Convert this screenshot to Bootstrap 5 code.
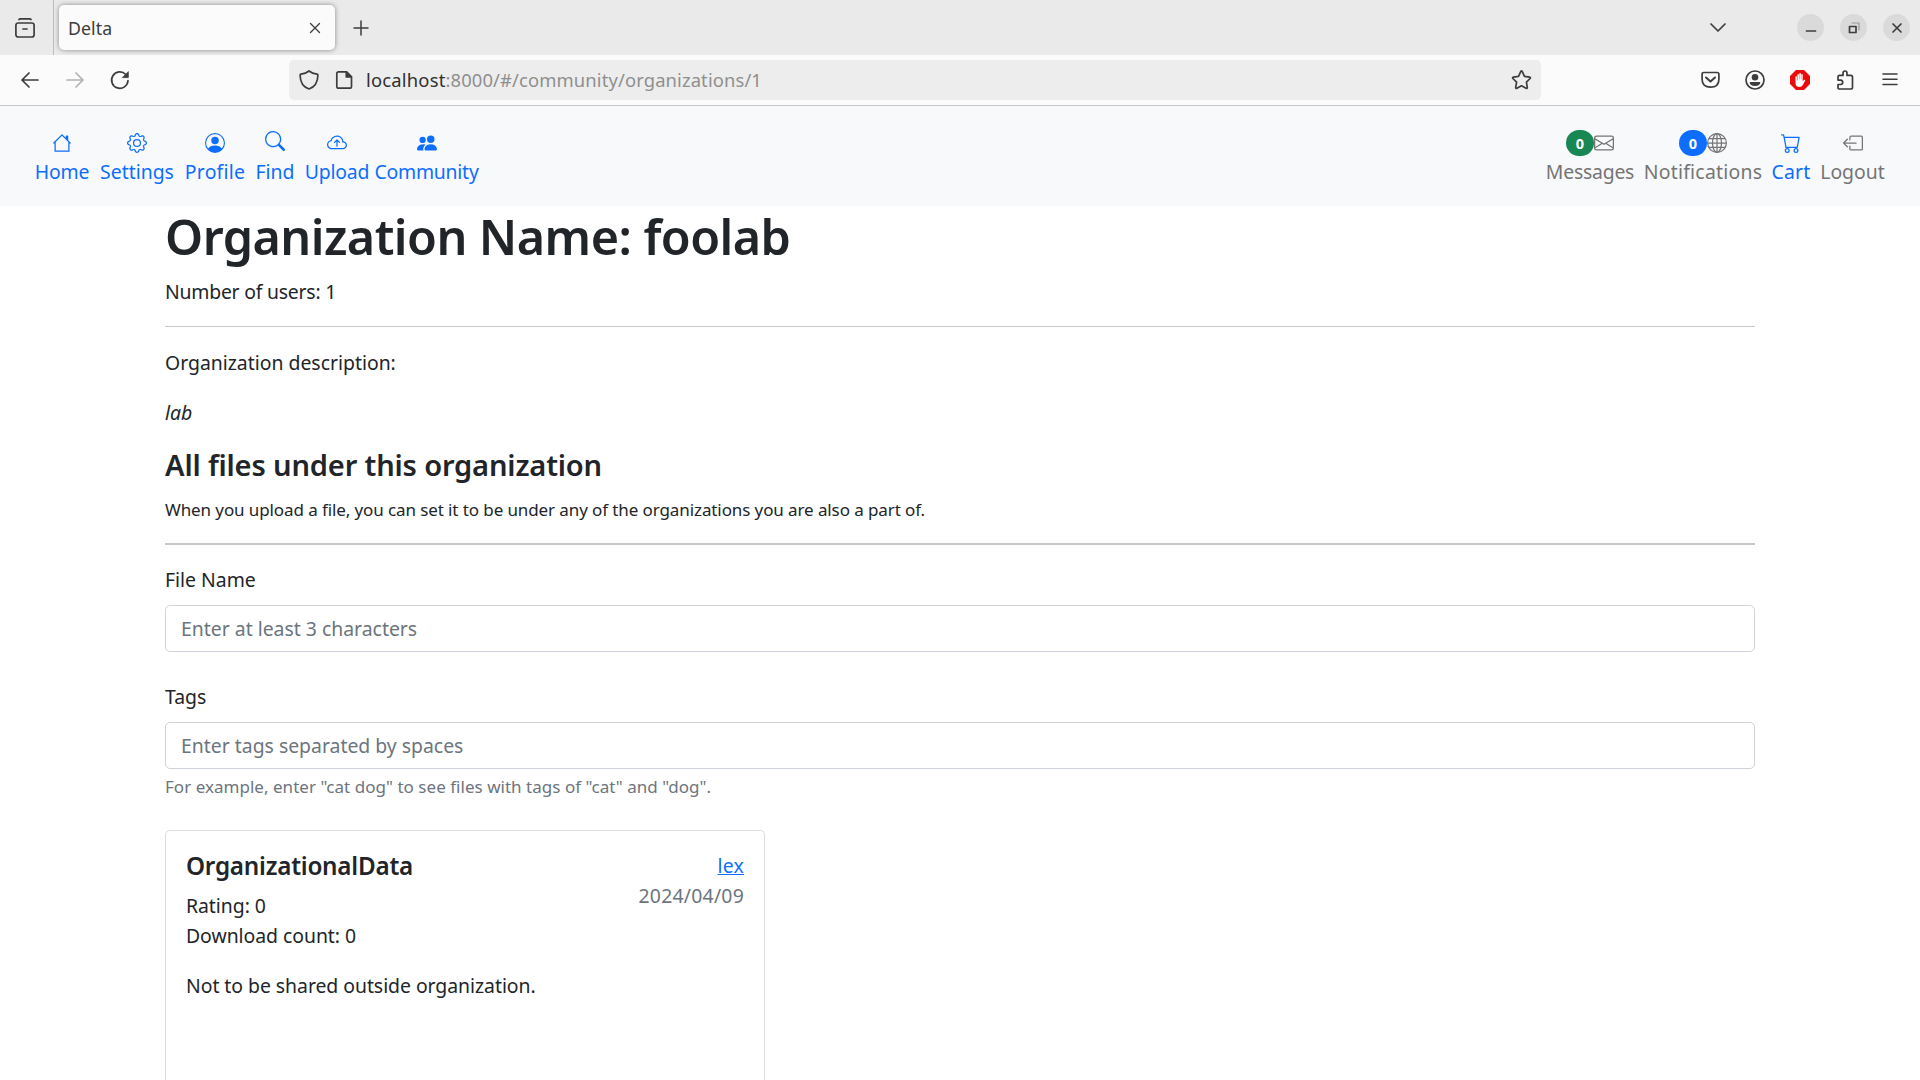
<!DOCTYPE html>
<html lang="en">
<head>
<meta charset="utf-8">
<meta name="viewport" content="width=device-width, initial-scale=1">
<title>Delta</title>
<link rel="stylesheet" href="https://cdn.jsdelivr.net/npm/bootstrap@5.3.0/dist/css/bootstrap.min.css">
<style>
html { font-size: 20px; }
body { font-family: "Noto Sans", "Open Sans", sans-serif; font-size: 19.4px; line-height: 30px; color: #212529; height: 1080px; overflow: hidden; }
svg { display: block; flex: none; overflow: visible; }
.line-icon { fill: none; stroke: #3d3d3d; stroke-width: 1.7; stroke-linecap: round; stroke-linejoin: round; }
/* Browser window */
.tab-strip { height: 55px; background: #eaeaea; padding-right: 10px; }
.strip-start { width: 54px; border-right: 1px solid #bdbdbd; padding-left: 15px; }
.page-tab { width: 276px; height: 45px; margin-left: 5px; padding: 0 14px 0 9px; border-radius: 5px; background: #fbfbfb; box-shadow: 0 0 5px rgba(0,0,0,.42); font-size: 17.7px; letter-spacing: .1px; color: #3d3d3d; }
.new-tab { margin-left: 15px; }
.win-controls { gap: 16px; margin-left: 71px; }
.win-btn { width: 27px; height: 27px; border-radius: 50%; background: #dadada; }
.address-row { height: 51px; background: #fbfbfb; border-bottom: 1px solid #c6c6c6; padding-left: 20px; padding-right: 20px; }
.nav-tools { width: 269px; gap: 25px; }
.url-field { width: 1252px; height: 40px; border-radius: 5px; background: #ededed; padding: 0 9px 0 10px; font-size: 18.4px; letter-spacing: .12px; color: #8f8f8f; }
.url-host { color: #303030; letter-spacing: .2px; }
.page-icon { margin-left: 18px; }
.url-text { margin-left: 13px; }
.tool-icons { gap: 25px; }
/* Application bar */
.app-bar { height: 100px; background: #f8f9fb; padding: 24px 34px 0; }
.bar-item { color: #0d6efd; text-decoration: none; white-space: nowrap; text-align: center; }
.bar-item.muted { color: #757575; }
.icon-slot { height: 26px; margin-bottom: 1px; display: flex; align-items: center; justify-content: center; }
.count-pill { width: 28px; height: 26px; padding: 0; font-size: 14.5px; line-height: 27px; font-weight: 700; }
.w-home { width: 56px; }
.w-settings { width: 94px; }
.w-profile { width: 62px; }
.w-find { width: 58px; }
.w-upload { width: 66px; }
.w-community { width: 113px; }
.w-messages { width: 90px; }
.w-notifications { width: 136px; }
.w-cart { width: 40px; }
.w-logout { width: 75px; padding-left: 8px; }
/* Organization page */
.org-page { padding: 0 165px; }
h1, h3, h5 { font-weight: 600; }
h1 { font-size: 48.5px; line-height: 60px; letter-spacing: -.54px; margin-bottom: 11px; }
h3 { font-size: 29.1px; line-height: 36px; letter-spacing: -.176px; margin: -1px 0 14px; }
.fine { font-size: 17px; line-height: 26.25px; letter-spacing: -.1px; }
.hint { font-size: 17px; line-height: 26.25px; color: #6c757d; margin-top: 5px; letter-spacing: .028px; }
.form-control { font-size: 19.4px; line-height: 30px; height: 47px; border-radius: 5px; border-color: #ced4da; }
.form-control::placeholder { color: #6c757d; }
hr { height: 0; opacity: 1; }
.rule-thin { margin: 19px 0 21px; border-top: 1px solid #c8c9ca; }
.rule-thick { margin: 20px 0; border-top: 2px solid #c8c9ca; }
.file-card { width: 600px; height: 250px; margin-top: 29px; border-color: #dcdddd; border-radius: 5px; }
.file-card h5 { font-size: 24.25px; line-height: 30px; letter-spacing: -.231px; }
.file-card p, .file-card .rating { letter-spacing: -.035px; }
.track-1 { letter-spacing: -.22px; }
.track-2 { letter-spacing: .23px; }
</style>
</head>
<body>
<header>
  <div class="tab-strip d-flex align-items-center">
    <div class="strip-start h-100 d-flex align-items-center">
      <svg class="line-icon" width="20" height="20" viewBox="0 0 20 20"><path d="M4 1.5Q4.400 .9 5.300 .9H14.700Q15.600 .9 16 1.500"/><rect x=".9" y="5" width="18.200" height="14" rx="2.300"/><path d="M8 11h4"/></svg>
    </div>
    <div class="page-tab d-flex align-items-center justify-content-between">
      <span>Delta</span>
      <svg class="line-icon" width="12" height="12" viewBox="0 0 12 12"><path stroke-width="1.300" d="M1.500 1.500l9 9M10.500 1.500l-9 9"/></svg>
    </div>
    <svg class="line-icon new-tab" width="20" height="20" viewBox="0 0 20 20"><path d="M4 10H18M11 3V17" stroke-width="1.500"/></svg>
    <div class="ms-auto d-flex align-items-center">
      <svg class="line-icon" width="16" height="10" viewBox="0 0 16 10"><path d="M1 1l7 7 7-7"/></svg>
      <div class="win-controls d-flex">
        <span class="win-btn d-flex align-items-center justify-content-center"><svg class="line-icon" width="12" height="12" viewBox="0 0 12 12"><path d="M1.500 9h9"/></svg></span>
        <span class="win-btn d-flex align-items-center justify-content-center"><svg class="line-icon" width="12" height="12" viewBox="0 0 12 12"><path d="M4 1h7v7" stroke="#999" stroke-width="1.200"/><path d="M1.500 4.500h6.500v6h-6.500z"/></svg></span>
        <span class="win-btn d-flex align-items-center justify-content-center"><svg class="line-icon" width="12" height="12" viewBox="0 0 12 12"><path d="M2 2l8 8M10 2l-8 8"/></svg></span>
      </div>
    </div>
  </div>
  <div class="address-row d-flex align-items-center">
    <div class="nav-tools d-flex align-items-center">
      <svg class="line-icon" width="20" height="20" viewBox="0 0 20 20"><path d="M18 10H2M9 3L2 10l7 7"/></svg>
      <svg class="line-icon" width="20" height="20" viewBox="0 0 20 20"><path stroke="#b3b3b3" d="M2 10h16M11 3l7 7-7 7"/></svg>
      <svg class="line-icon" width="20" height="20" viewBox="0 0 20 20"><path d="M18 10.500a8.200 8.200 0 1 1-2.200-6l1 1"/><path d="M18.300 2v5.600h-5.600z" fill="#3d3d3d" stroke-width=".8"/></svg>
    </div>
    <div class="url-field d-flex align-items-center">
      <svg class="line-icon" width="20" height="20" viewBox="0 0 20 20"><path d="M10 1C7.500 3 4.500 3.900 2 4.200C1.400 4.300 1.100 4.700 1.100 5.300C1.200 11.500 4 17 10 19C16 17 18.800 11.500 18.900 5.300C18.900 4.700 18.600 4.300 18 4.200C15.500 3.900 12.500 3 10 1Z"/></svg>
      <svg class="line-icon page-icon" width="16" height="20" viewBox="2 0 16 20"><path d="M3.500 1.900h8l5 5v9.600q0 1.700-1.700 1.700H3.500q-1.700 0-1.700-1.700V3.600q0-1.700 1.700-1.700z"/><path d="M11.300 1.900v5h5z" fill="#3d3d3d"/></svg>
      <div class="url-text"><span class="url-host">localhost</span>:8000/#/community/organizations/1</div>
      <svg class="line-icon ms-auto" width="21" height="20" viewBox="0 0 20 20"><path d="M9.200 1.600q.8-1.300 1.600 0l2.200 4.800 5.100.7q1.400.3.500 1.400l-3.700 3.700.9 5.200q.1 1.500-1.200.9L10 15.800l-4.600 2.500q-1.300.6-1.200-.9l.9-5.200-3.700-3.700q-.9-1.100.5-1.400l5.100-.7z"/></svg>
    </div>
    <div class="tool-icons ms-auto d-flex align-items-center">
      <svg class="line-icon" width="19" height="20" viewBox="0 0 19 20"><path d="M2.800 2.500h13.400q1.700 0 1.700 1.700v5q0 8-8.400 8t-8.400-8v-5q0-1.700 1.700-1.700z"/><path d="M5 7.500l4.500 4 4.500-4" stroke-width="2"/></svg>
      <svg class="line-icon" width="20" height="20" viewBox="0 0 20 20"><circle cx="10" cy="10" r="9"/><circle cx="10" cy="7.300" r="3.300" fill="#3d3d3d" stroke="none"/><path d="M4.700 12h10.600q0 4-5.300 4t-5.300-4z" fill="#3d3d3d" stroke="none"/></svg>
      <svg width="20" height="20" viewBox="0 0 20 20"><path fill="#e80c0c" d="M6 0h8l6 6v8l-6 6H6l-6-6V6z"/><path fill="#fff" d="M5.500 6.500q.8-.7 1.400 0v4h.5v-6q.8-1 1.500 0v5h.4V3.500q.8-.9 1.600 0v6h.4V4.500q.8-.8 1.400 0v6.700l1.300-1.300q1.100-.6 1.300.3l-2.500 4.800q-1 2-3.300 2-4 0-4-4z"/></svg>
      <svg class="line-icon" width="20" height="20" viewBox="-1 0 20 20"><path d="M2 9V7q0-1.600 1.600-1.600H7V3.200q0-2.200 2-2.200t2 2.200v2.200h3.800q1.700 0 1.700 1.700v10.200q0 1.700-1.700 1.700H3.600Q2 19 2 17.400V14.500h2.700q2-.2 2-2.200t-2-2.200H2z"/></svg>
      <svg class="line-icon" width="20" height="20" viewBox="0 0 20 20"><path d="M3 4h14M3 9.200h14M3 14.400h14" stroke-width="1.500"/></svg>
    </div>
  </div>
</header>

<nav class="app-bar d-flex justify-content-between">
  <div class="d-flex">
    <a class="bar-item w-home"><span class="icon-slot"><svg width="20" height="20" viewBox="0 0 16 16" fill="currentColor"><path d="M8.354 1.146a.5.5 0 0 0-.708 0l-6.500 6.500a.5.500 0 0 0 .708.708L2 8.207V14.500a.5.500 0 0 0 .5.500h11a.5.500 0 0 0 .5-.5V8.207l.146.147a.5.500 0 0 0 .708-.708L13 5.793V2.500a.5.500 0 0 0-.5-.5h-1a.5.500 0 0 0-.5.500v1.293L8.354 1.146zM13 7.207V14H3V7.207l5-5 5 5z"/></svg></span><span class="track-1">Home</span></a>
    <a class="bar-item w-settings"><span class="icon-slot"><svg width="20" height="20" viewBox="0 0 16 16" fill="currentColor"><path d="M8 4.754a3.246 3.246 0 1 0 0 6.492 3.246 3.246 0 0 0 0-6.492zM5.754 8a2.246 2.246 0 1 1 4.492 0 2.246 2.246 0 0 1-4.492 0z"/><path d="M9.796 1.343c-.527-1.790-3.065-1.790-3.592 0l-.094.319a.873.873 0 0 1-1.255.520l-.292-.160c-1.640-.892-3.433.902-2.540 2.541l.159.292a.873.873 0 0 1-.520 1.255l-.319.094c-1.790.527-1.790 3.065 0 3.592l.319.094a.873.873 0 0 1 .520 1.255l-.160.292c-.892 1.640.901 3.434 2.541 2.540l.292-.159a.873.873 0 0 1 1.255.520l.094.319c.527 1.790 3.065 1.790 3.592 0l.094-.319a.873.873 0 0 1 1.255-.520l.292.160c1.640.893 3.434-.902 2.540-2.541l-.159-.292a.873.873 0 0 1 .520-1.255l.319-.094c1.790-.527 1.790-3.065 0-3.592l-.319-.094a.873.873 0 0 1-.520-1.255l.160-.292c.893-1.640-.902-3.433-2.541-2.540l-.292.159a.873.873 0 0 1-1.255-.520l-.094-.319zm-2.633.283c.246-.835 1.428-.835 1.674 0l.094.319a1.873 1.873 0 0 0 2.693 1.115l.291-.160c.764-.415 1.600.420 1.184 1.185l-.159.292a1.873 1.873 0 0 0 1.116 2.692l.318.094c.835.246.835 1.428 0 1.674l-.319.094a1.873 1.873 0 0 0-1.115 2.693l.160.291c.415.764-.420 1.600-1.185 1.184l-.291-.159a1.873 1.873 0 0 0-2.693 1.116l-.094.318c-.246.835-1.428.835-1.674 0l-.094-.319a1.873 1.873 0 0 0-2.692-1.115l-.292.160c-.764.415-1.600-.420-1.184-1.185l.159-.291A1.873 1.873 0 0 0 1.945 8.930l-.319-.094c-.835-.246-.835-1.428 0-1.674l.319-.094A1.873 1.873 0 0 0 3.060 4.377l-.160-.292c-.415-.764.420-1.600 1.185-1.184l.292.159a1.873 1.873 0 0 0 2.692-1.115l.094-.319z"/></svg></span><span>Settings</span></a>
    <a class="bar-item w-profile"><span class="icon-slot"><svg width="20" height="20" viewBox="0 0 16 16" fill="currentColor"><path d="M11 6a3 3 0 1 1-6 0 3 3 0 0 1 6 0z"/><path fill-rule="evenodd" d="M0 8a8 8 0 1 1 16 0A8 8 0 0 1 0 8zm8-7a7 7 0 0 0-5.468 11.370C3.242 11.226 4.805 10 8 10s4.757 1.225 5.468 2.370A7 7 0 0 0 8 1z"/></svg></span><span class="track-2">Profile</span></a>
    <a class="bar-item w-find"><span class="icon-slot pb-1"><svg width="20" height="20" viewBox="0 0 16 16" fill="currentColor"><path d="M11.742 10.344a6.500 6.500 0 1 0-1.397 1.398h-.001c.030.040.062.078.098.115l3.850 3.850a1 1 0 0 0 1.415-1.414l-3.850-3.850a1.007 1.007 0 0 0-.115-.100zM12 6.500a5.500 5.500 0 1 1-11 0 5.500 5.500 0 0 1 11 0z"/></svg></span><span>Find</span></a>
    <a class="bar-item w-upload"><span class="icon-slot"><svg width="20" height="20" viewBox="0 0 16 16" fill="currentColor"><path fill-rule="evenodd" d="M7.646 5.146a.5.500 0 0 1 .708 0l2 2a.5.500 0 0 1-.708.708L8.500 6.707V10.500a.5.500 0 0 1-1 0V6.707L6.354 7.854a.5.500 0 1 1-.708-.708l2-2z"/><path d="M4.406 3.342A5.530 5.530 0 0 1 8 2c2.690 0 4.923 2 5.166 4.579C14.758 6.804 16 8.137 16 9.773 16 11.569 14.502 13 12.687 13H3.781C1.708 13 0 11.366 0 9.318c0-1.763 1.266-3.223 2.942-3.593.143-.863.698-1.723 1.464-2.383zm.653.757c-.757.653-1.153 1.440-1.153 2.056v.448l-.445.049C2.064 6.805 1 7.952 1 9.318 1 10.785 2.230 12 3.781 12h8.906C13.980 12 15 10.988 15 9.773c0-1.216-1.020-2.228-2.313-2.228h-.5v-.5C12.188 4.825 10.328 3 8 3a4.530 4.530 0 0 0-2.941 1.100z"/></svg></span><span class="track-1">Upload</span></a>
    <a class="bar-item w-community"><span class="icon-slot"><svg width="20" height="20" viewBox="0 0 16 16" fill="currentColor"><path d="M7 14s-1 0-1-1 1-4 5-4 5 3 5 4-1 1-1 1H7zm4-6a3 3 0 1 0 0-6 3 3 0 0 0 0 6z"/><path fill-rule="evenodd" d="M5.216 14A2.238 2.238 0 0 1 5 13c0-1.355.680-2.750 1.936-3.720A6.325 6.325 0 0 0 5 9c-4 0-5 3-5 4s1 1 1 1h4.216z"/><path d="M4.500 8a2.500 2.500 0 1 0 0-5 2.500 2.500 0 0 0 0 5z"/></svg></span><span class="track-1">Community</span></a>
  </div>
  <div class="d-flex">
    <a class="bar-item muted w-messages"><span class="icon-slot"><span class="badge rounded-pill bg-success count-pill">0</span><svg width="20" height="20" viewBox="0 0 16 16" fill="currentColor"><path d="M0 4a2 2 0 0 1 2-2h12a2 2 0 0 1 2 2v8a2 2 0 0 1-2 2H2a2 2 0 0 1-2-2V4zm2-1a1 1 0 0 0-1 1v.217l7 4.200 7-4.200V4a1 1 0 0 0-1-1H2zm13 2.383-4.708 2.825L15 11.105V5.383zm-.034 6.876-5.640-3.471L8 9.583l-1.326-.795-5.640 3.470A1 1 0 0 0 2 13h12a1 1 0 0 0 .966-.741zM1 11.105l4.708-2.897L1 5.383v5.722z"/></svg></span><span class="track-1">Messages</span></a>
    <a class="bar-item muted w-notifications"><span class="icon-slot"><span class="badge rounded-pill bg-primary count-pill">0</span><svg width="20" height="20" viewBox="0 0 16 16" fill="none" stroke="currentColor"><circle cx="8" cy="8" r="7.500"/><ellipse cx="8" cy="8" rx="3.600" ry="7.500"/><path d="M8 .5v15M.5 8h15M1.600 4.500h12.800M1.600 11.500h12.800"/></svg></span><span class="track-2">Notifications</span></a>
    <a class="bar-item w-cart"><span class="icon-slot"><svg width="20" height="20" viewBox="0 0 16 16" fill="currentColor"><path d="M0 1.500A.5.500 0 0 1 .5 1H2a.5.500 0 0 1 .485.379L2.890 3H14.500a.5.500 0 0 1 .491.592l-1.500 8A.5.500 0 0 1 13 12H4a.5.500 0 0 1-.491-.408L2.010 3.607 1.610 2H.5a.5.500 0 0 1-.5-.5zM3.102 4l1.313 7h8.170l1.313-7H3.102zM5 12a2 2 0 1 0 0 4 2 2 0 0 0 0-4zm7 0a2 2 0 1 0 0 4 2 2 0 0 0 0-4zm-7 1a1 1 0 1 1 0 2 1 1 0 0 1 0-2zm7 0a1 1 0 1 1 0 2 1 1 0 0 1 0-2z"/></svg></span><span class="track-2">Cart</span></a>
    <a class="bar-item muted w-logout"><span class="icon-slot"><svg width="20" height="20" viewBox="0 0 16 16" fill="currentColor"><path fill-rule="evenodd" d="M6 12.500a.5.500 0 0 0 .5.500h8a.5.500 0 0 0 .5-.5v-9a.5.500 0 0 0-.5-.5h-8a.5.500 0 0 0-.5.500v2a.5.500 0 0 1-1 0v-2A1.500 1.500 0 0 1 6.500 2h8A1.500 1.500 0 0 1 16 3.500v9a1.500 1.500 0 0 1-1.500 1.500h-8A1.500 1.500 0 0 1 5 12.500v-2a.5.500 0 0 1 1 0v2z"/><path fill-rule="evenodd" d="M.146 8.354a.5.500 0 0 1 0-.708l3-3a.5.500 0 1 1 .708.708L1.707 7.500H10.500a.5.500 0 0 1 0 1H1.707l2.147 2.146a.5.500 0 0 1-.708.708l-3-3z"/></svg></span><span>Logout</span></a>
  </div>
</nav>

<main class="org-page">
  <h1>Organization Name: foolab</h1>
  <p class="mb-0 track-1">Number of users: 1</p>
  <hr class="rule-thin">
  <p>Organization description:</p>
  <p class="fst-italic">lab</p>
  <h3>All files under this organization</h3>
  <p class="fine mb-0">When you upload a file, you can set it to be under any of the organizations you are also a part of.</p>
  <hr class="rule-thick">
  <form>
    <label class="form-label" for="fileName">File Name</label>
    <input class="form-control" id="fileName" type="text" placeholder="Enter at least 3 characters">
    <label class="form-label mt-4" for="fileTags">Tags</label>
    <input class="form-control" id="fileTags" type="text" placeholder="Enter tags separated by spaces">
    <div class="hint">For example, enter "cat dog" to see files with tags of "cat" and "dog".</div>
  </form>
  <div class="card file-card border-bottom-0 rounded-bottom-0">
    <div class="card-body d-flex justify-content-between">
      <div>
        <h5>OrganizationalData</h5>
        <div class="rating">Rating: 0</div>
        <p>Download count: 0</p>
        <p class="mb-0">Not to be shared outside organization.</p>
      </div>
      <div class="text-end track-2">
        <a href="#">lex</a>
        <div class="text-secondary">2024/04/09</div>
      </div>
    </div>
  </div>
</main>
<script src="https://cdn.jsdelivr.net/npm/bootstrap@5.3.0/dist/js/bootstrap.bundle.min.js"></script>
</body>
</html>
